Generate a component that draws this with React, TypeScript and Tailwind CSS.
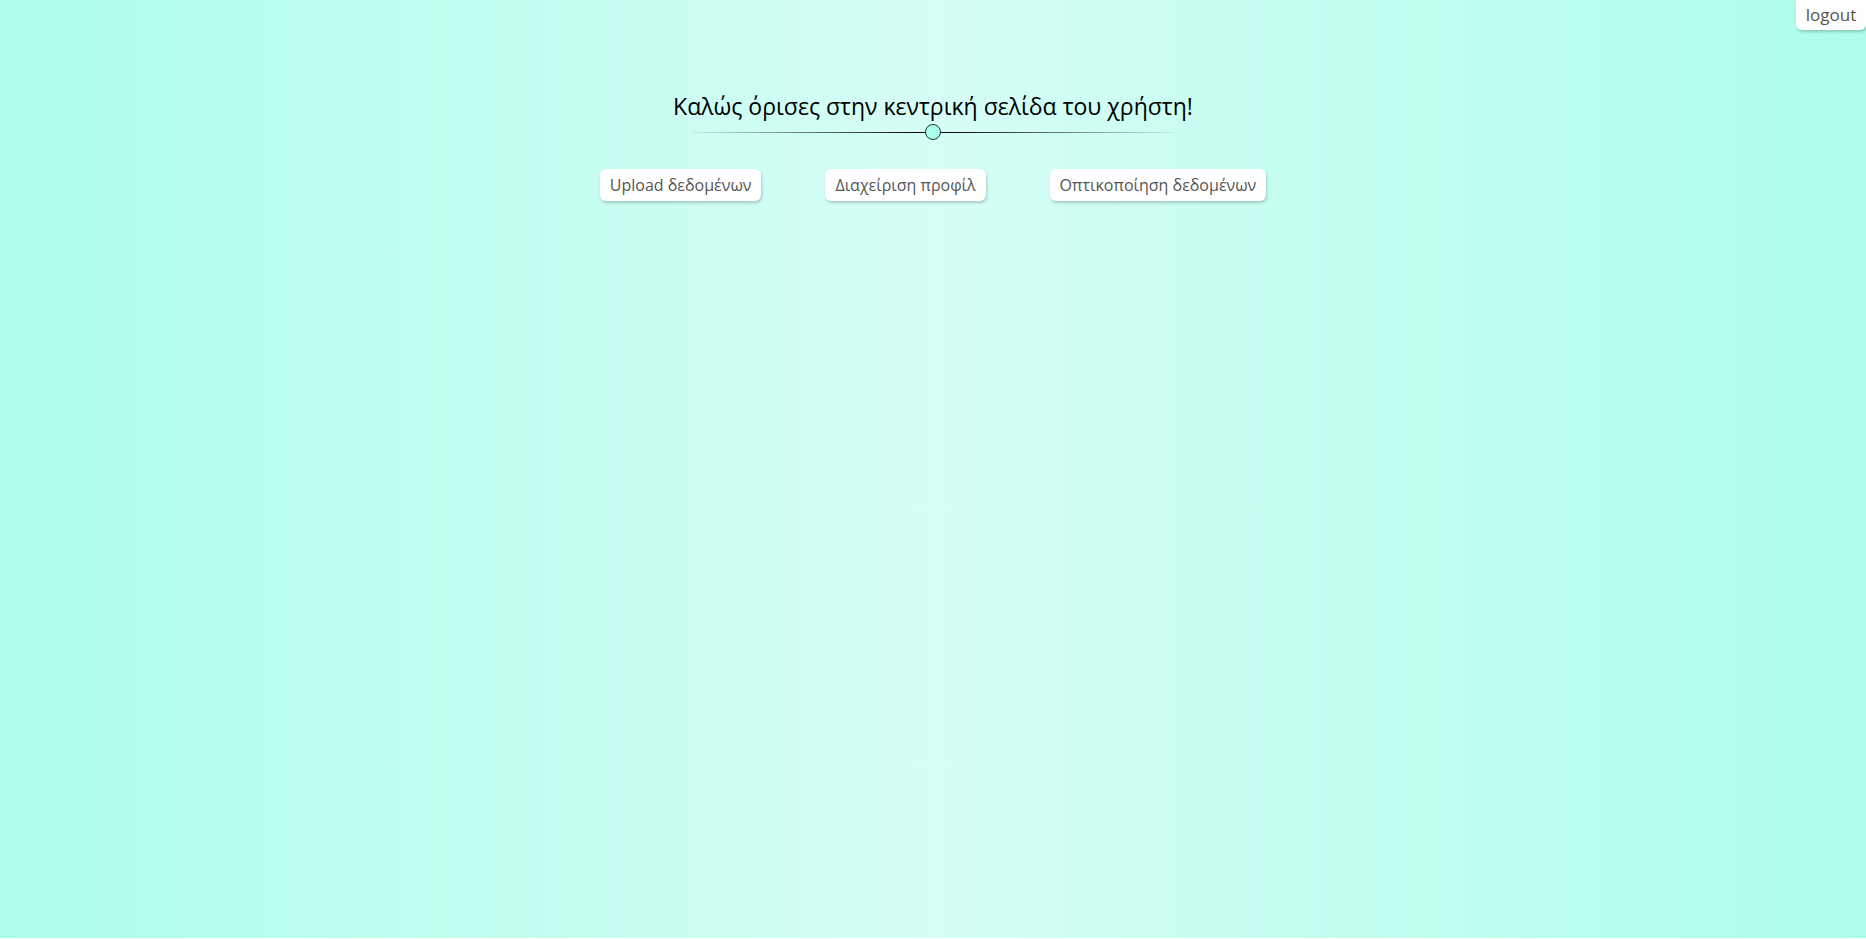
import React from "react";

const buttons = ["Upload δεδομένων", "Διαχείριση προφίλ", "Οπτικοποίηση δεδομένων"];

export default function App() {
  return (
    <div
      className="relative h-[938px] w-full bg-[linear-gradient(to_right,#acfdea_0%,#d6fef6_50%,#acfdea_100%)] font-['Open_Sans',sans-serif]"
    >
      {/* logout */}
      <button
        type="button"
        className="absolute right-0 top-0 h-[30px] w-[70px] rounded-bl-[6px] rounded-br-[6px] bg-white text-[17px] text-[#555] shadow-[1px_2px_3px_rgba(0,0,0,0.2)]"
      >
        logout
      </button>

      <div className="flex flex-col items-center pt-[90px]">
        <h1 className="text-[23px] leading-[32px] text-black">Καλώς όρισες στην κεντρική σελίδα του χρήστη!</h1>

        {/* divider with knob */}
        <div className="mt-[2px] flex w-[482px] items-center">
          <div className="h-px flex-1 bg-[linear-gradient(to_right,rgba(0,0,0,0.05),#000)]" />
          <div className="h-[16px] w-[16px] shrink-0 rounded-full border border-[#1a3a33] bg-[#acfdea]" />
          <div className="h-px flex-1 bg-[linear-gradient(to_right,#000,rgba(0,0,0,0.05))]" />
        </div>

        <div className="mt-[29px] flex items-center gap-[64px]">
          {buttons.map((b) => (
            <button
              key={b}
              type="button"
              className="h-[32px] rounded-[6px] bg-white px-[10px] text-[16px] text-[#555] shadow-[1px_2px_3px_rgba(0,0,0,0.2)]"
            >
              {b}
            </button>
          ))}
        </div>
      </div>
    </div>
  );
}
